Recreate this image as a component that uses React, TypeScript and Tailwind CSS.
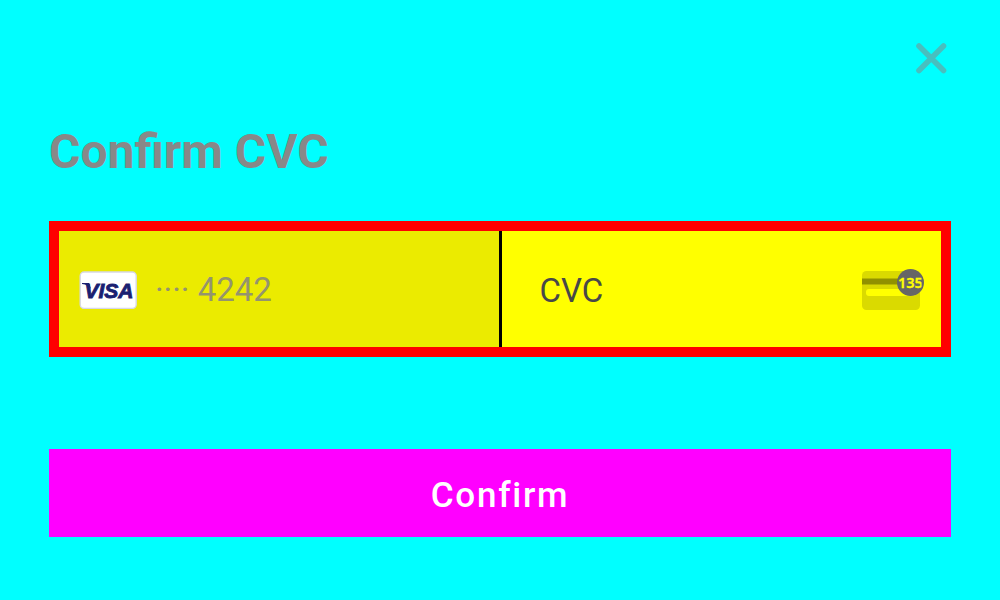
import { useState } from "react";

function CloseIcon() {
  return (
    <svg viewBox="0 0 32 32" className="size-8" fill="none" stroke="#48bfbf" strokeWidth="5.6" strokeLinecap="round" aria-hidden="true">
      <path d="M4 4 28.5 28.5M28.5 4 4 28.5" />
    </svg>
  );
}

function VisaLogo() {
  return (
    <svg viewBox="0 0 58 38" className="h-[38px] w-[58px] shrink-0" role="img" aria-label="Visa">
      <rect x="1.2" y="1" width="56" height="36.4" rx="4" fill="#fff" stroke="#d6d7e5" strokeWidth="1.4" />
      <path d="M3 12.1H10L12 18Q9 13.6 3 13Z" fill="#1a1f71" />
      <text x="5.5" y="27.4" fill="#1a1f71" stroke="#1a1f71" strokeWidth="0.9" fontFamily="Liberation Sans, sans-serif" fontSize="21" fontStyle="italic" fontWeight="700">
        VISA
      </text>
    </svg>
  );
}

function CvcIcon() {
  return (
    <svg viewBox="0 0 64 44" className="h-11 w-16 shrink-0" aria-hidden="true">
      <defs>
        <clipPath id="badge">
          <rect x="35" y="0" width="24.6" height="30" />
        </clipPath>
      </defs>
      <rect x="0" y="3" width="58" height="39" rx="4.5" fill="#dada00" />
      <rect x="0" y="10.5" width="58" height="6" fill="#919100" />
      <rect x="4" y="21" width="50" height="7" rx="3" fill="#ffff00" />
      <circle cx="48.5" cy="14.5" r="13.5" fill="#666666" />
      <text x="36" y="20" fill="#ffff00" stroke="#ffff00" strokeWidth="0.3" clipPath="url(#badge)" fontFamily="Noto Sans, sans-serif" fontSize="14.5" fontWeight="600">
        135
      </text>
    </svg>
  );
}

export default function App() {
  const [cvc, setCvc] = useState("");

  return (
    <main className="min-h-screen bg-[#00ffff] px-[49px] pt-[42px] font-['Roboto',sans-serif]">
      <div className="flex justify-end pr-1">
        <button type="button" aria-label="Close">
          <CloseIcon />
        </button>
      </div>
      <form onSubmit={(e) => e.preventDefault()}>
        <h1 className="mt-[46px] text-[48px] leading-[64px] font-bold text-[#888888]">Confirm CVC</h1>
        <div className="mt-[37px] grid h-[136px] grid-cols-[1fr_3px_1fr] border-10 border-[#ff0000] bg-[#ffff00]">
          <div className="flex items-center gap-[18px] bg-[#ebeb00] pt-0.5 pl-5 text-[33px] leading-[42px] text-[#94946d]">
            <VisaLogo />
            <span>···· 4242</span>
          </div>
          <div className="bg-black" />
          <div className="flex min-w-0 items-center pt-0.5 pr-[15px] pl-[38px]">
            <input
              aria-label="CVC"
              placeholder="CVC"
              inputMode="numeric"
              maxLength={4}
              value={cvc}
              onChange={(e) => setCvc(e.target.value)}
              className="h-[42px] min-w-0 flex-1 bg-transparent pt-0.5 text-[33px] text-[#484848] outline-none placeholder:text-[#484848]"
            />
            <CvcIcon />
          </div>
        </div>
        <button type="submit" className="mt-[92px] h-[88px] w-full bg-[#ff00ff] pt-1.5 text-[35px] leading-10 font-medium tracking-wider text-white">
          Confirm
        </button>
      </form>
    </main>
  );
}
